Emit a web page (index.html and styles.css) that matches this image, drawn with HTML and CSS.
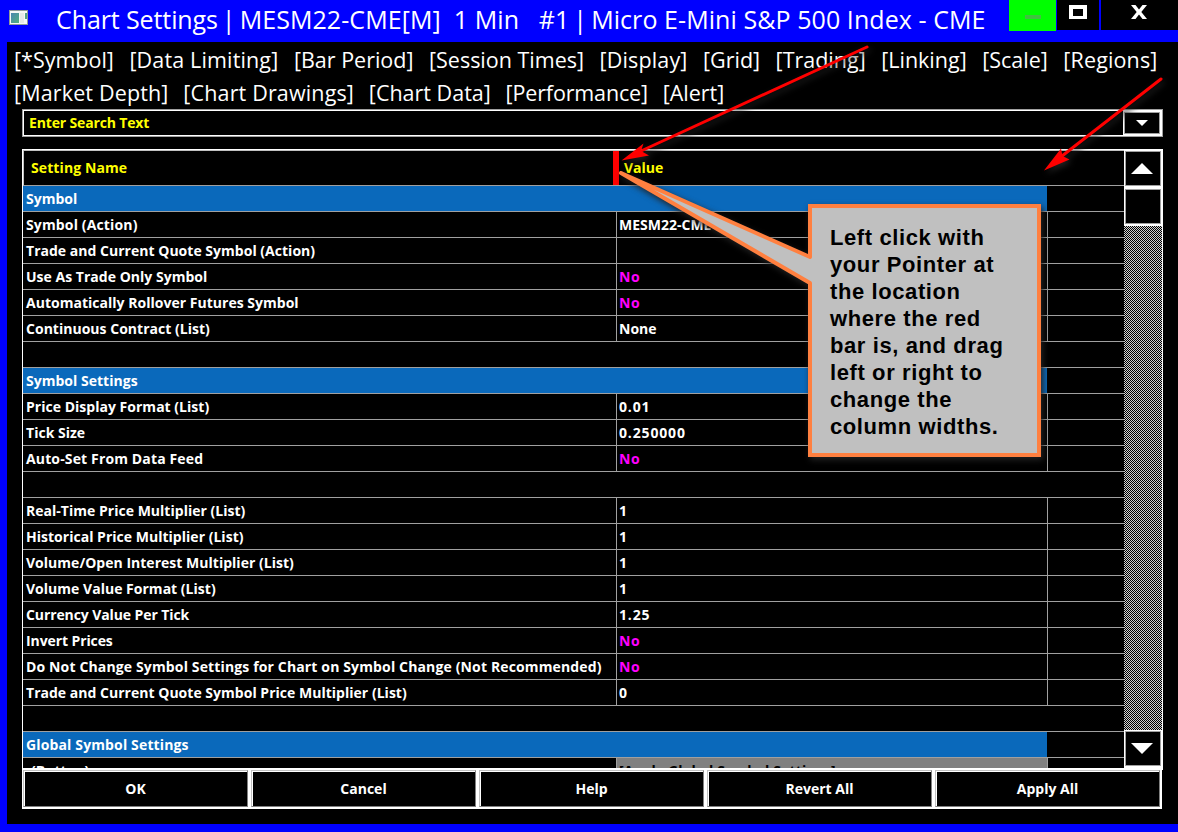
FILE: index.html
```html
<!DOCTYPE html>
<html lang="en">
<head>
<meta charset="utf-8">
<title>Chart Settings</title>
<link rel="stylesheet" href="styles.css">
</head>
<body>
<div class="window">
  <header class="titlebar">
    <svg class="app-icon" width="19" height="15" viewBox="0 0 19 15">
      <defs><linearGradient id="ic" x1="0" y1="0" x2="1" y2="1"><stop offset="0" stop-color="#4a86b0"/><stop offset="1" stop-color="#4fb080"/></linearGradient></defs>
      <rect width="19" height="15" fill="#8f9a98"/><rect x="1" y="1" width="17" height="13" fill="#f4f8f6"/>
      <rect x="2" y="3" width="8" height="10" fill="url(#ic)"/>
      <rect x="11" y="3" width="4" height="10" fill="#e4e8e6"/><rect x="16" y="3" width="2" height="6" fill="#4f9f88"/>
    </svg>
    <h1 class="title"><span class="title-lead">Chart Settings</span><span class="pipe"> | </span>MESM22-CME[M]  1 Min   #1<span class="pipe"> | </span>Micro E-Mini S&amp;P 500 Index - CME</h1>
    <div class="controls">
      <button class="ctl ctl-min"><svg width="16" height="4"><rect width="16" height="4" fill="#40c040"/></svg></button>
      <button class="ctl ctl-max"><svg width="18" height="14"><path fill="#fff" fill-rule="evenodd" d="M0 0H18V14H0ZM4 4V11H14V4Z"/></svg></button>
      <button class="ctl ctl-close"><svg width="16" height="14"><path fill="#fff" d="M0 0H4.500L8 4.500L11.500 0H16L10.300 7L16 14H11.500L8 9.500L4.500 14H0L5.700 7Z"/></svg></button>
    </div>
  </header>
  <nav class="tabs">
    <div class="tab-row"><span>[*Symbol]</span><span class="wide">[Data Limiting]</span><span>[Bar Period]</span><span>[Session Times]</span><span class="wide">[Display]</span><span>[Grid]</span><span>[Trading]</span><span>[Linking]</span><span>[Scale]</span><span class="wide">[Regions]</span></div>
    <div class="tab-row second"><span class="wide">[Market Depth]</span><span class="wide">[Chart Drawings]</span><span>[Chart Data]</span><span class="tight">[Performance]</span><span>[Alert]</span></div>
  </nav>
  <div class="search">
    <span class="search-text">Enter Search Text</span>
    <button class="drop"><svg width="12" height="6"><path d="M0 0H12L6 6Z" fill="#fff"/></svg></button>
  </div>
  <div class="panel">
    <div class="grid">
      <div class="head"><span class="head-name">Setting Name</span><i class="red-bar"></i><span class="head-value">Value</span></div>
      <div class="row section"><span class="name">Symbol</span></div>
      <div class="row"><span class="name loose">Symbol (Action)</span><span class="value">MESM22-CME</span></div>
      <div class="row"><span class="name">Trade and Current Quote Symbol (Action)</span><span class="value"></span></div>
      <div class="row"><span class="name">Use As Trade Only Symbol</span><span class="value no">No</span></div>
      <div class="row"><span class="name">Automatically Rollover Futures Symbol</span><span class="value no">No</span></div>
      <div class="row"><span class="name">Continuous Contract (List)</span><span class="value">None</span></div>
      <div class="row"></div>
      <div class="row section"><span class="name">Symbol Settings</span></div>
      <div class="row"><span class="name">Price Display Format (List)</span><span class="value num">0.01</span></div>
      <div class="row"><span class="name">Tick Size</span><span class="value num">0.250000</span></div>
      <div class="row"><span class="name loose">Auto-Set From Data Feed</span><span class="value no">No</span></div>
      <div class="row"></div>
      <div class="row"><span class="name">Real-Time Price Multiplier (List)</span><span class="value">1</span></div>
      <div class="row"><span class="name">Historical Price Multiplier (List)</span><span class="value">1</span></div>
      <div class="row"><span class="name">Volume/Open Interest Multiplier (List)</span><span class="value">1</span></div>
      <div class="row"><span class="name">Volume Value Format (List)</span><span class="value">1</span></div>
      <div class="row"><span class="name snug">Currency Value Per Tick</span><span class="value num">1.25</span></div>
      <div class="row"><span class="name snug">Invert Prices</span><span class="value no">No</span></div>
      <div class="row"><span class="name loose">Do Not Change Symbol Settings for Chart on Symbol Change (Not Recommended)</span><span class="value no">No</span></div>
      <div class="row"><span class="name">Trade and Current Quote Symbol Price Multiplier (List)</span><span class="value">0</span></div>
      <div class="row"></div>
      <div class="row section"><span class="name loose">Global Symbol Settings</span></div>
      <div class="row"><span class="name indent">(Button)</span><span class="value action">[Apply Global Symbol Settings]</span></div>
    </div>
    <div class="scroll">
      <div class="sbtn"><svg width="22" height="11"><path d="M0 11L11 0L22 11Z" fill="#fff"/></svg></div>
      <div class="sbtn"></div>
      <div class="track"></div>
      <div class="sbtn"><svg width="22" height="11"><path d="M0 0H22L11 11Z" fill="#fff"/></svg></div>
    </div>
  </div>
  <footer class="buttons">
    <button class="btn">OK</button><button class="btn">Cancel</button><button class="btn">Help</button><button class="btn">Revert All</button><button class="btn">Apply All</button>
  </footer>
</div>
<svg class="notes" width="1178" height="832">
  <g class="shadow">
    <g fill="#f00" stroke="#f00">
      <path d="M867 47L641 151" stroke-width="3" stroke-linecap="round"/>
      <path d="M621.500 160.500L643.500 143.500L641 151L649 155.500Z" stroke="none"/>
      <path d="M1161 79L1062 156" stroke-width="3" stroke-linecap="round"/>
      <path d="M1044 170.500L1061 148.500L1062.500 156L1069.500 159.500Z" stroke="none"/>
    </g>
  </g>
  <g class="shadow">
    <path d="M810 206H1039V455H810V283L621 173L810 257Z" fill="#c0c0c0" stroke="#ff8040" stroke-width="4" stroke-linejoin="round"/>
    <path d="M808 257V204H1041V457H808V283H812V453H1037V208H812V257Z" fill="#ff8040"/>
  </g>
</svg>
<div class="callout">Left click with<br>your Pointer at<br>the location<br>where the red<br>bar is, and drag<br>left or right to<br>change the<br>column widths.</div>
</body>
</html>
```

FILE: styles.css
```css
* { box-sizing: border-box; }
body { margin: 0; background: #00f; width: 1178px; height: 832px; overflow: hidden; position: relative; font-family: "Open Sans", "Noto Sans", sans-serif; }
button { font: inherit; color: inherit; border: 0; padding: 0; margin: 0; background: #000; }
svg { display: block; }
.window { width: 1178px; height: 824px; padding-left: 7px; background: linear-gradient(#00f, #00f) left / 7px 100% no-repeat #000; display: flex; flex-direction: column; }
.titlebar { height: 42px; background: #00f; display: flex; align-items: flex-start; flex: none; color: #fff; }
.app-icon { margin: 10px 0 0 2px; flex: none; }
.title { margin: 2px 0 0 28px; width: 953px; font-size: 25px; line-height: 34px; font-weight: 400; white-space: pre; letter-spacing: .07px; }
.title-lead { letter-spacing: -.1px; }
.pipe { word-spacing: -2.600px; }
.controls { display: flex; flex: none; }
.ctl { height: 30px; display: flex; justify-content: center; flex: none; }
.ctl-min { width: 47px; height: 31px; background: #0f0; padding-top: 15px; }
.ctl-max { width: 42px; margin-left: 1px; padding-top: 5px; }
.ctl-close { width: 77px; margin-left: 2px; padding: 5px 2px 0 0; }
.tabs { height: 67px; flex: none; padding: 1px 0 0 7px; color: #fff; font-size: 21.500px; line-height: 33px; }
.tab-row { display: flex; gap: 15.500px; white-space: pre; }
.second { gap: 14.800px; }
.tight { letter-spacing: -.15px; }
.wide { letter-spacing: .15px; }
.search { flex: none; margin-left: 15px; width: 1141px; height: 28px; border: 1px solid #a0a0a0; box-shadow: inset 0 0 0 1px #fff; display: flex; justify-content: space-between; color: #ff0; font-size: 14px; font-weight: 700; }
.search-text { padding: 0 0 0 6px; line-height: 26px; letter-spacing: -.15px; }
.drop { width: 39px; border: solid #fff; border-width: 1px 2px 1px 1px; box-shadow: inset 0 0 0 1px #a0a0a0; margin: 1px 0; display: flex; align-items: center; justify-content: center; }
.panel { flex: none; margin: 12px 0 0 15px; width: 1141px; height: 621px; border: 1px solid #fff; border-bottom-width: 2px; display: flex; color: #fff; font-size: 14px; font-weight: 700; }
.grid { width: 1101px; height: 618px; overflow: hidden; }
.head { height: 36px; border-top: 1px solid #c0c0c0; border-left: 1px solid #c0c0c0; border-bottom: 1px solid #a0a0a0; color: #ff0; display: flex; line-height: 34px; }
.head-name { width: 589px; padding-left: 7px; letter-spacing: .1px; }
.red-bar { width: 6px; background: #f00; }
.head-value { padding-left: 5px; }
.row { height: 26px; border-bottom: 1px solid #a0a0a0; display: flex; line-height: 25px; white-space: nowrap; }
.name { width: 593px; padding-left: 3px; flex: none; letter-spacing: .02px; }
.loose { letter-spacing: .14px; }
.snug { letter-spacing: -.1px; }
.indent { padding-left: 8px; }
.value { width: 432px; padding-left: 2px; border: solid #a0a0a0; border-width: 0 1px; flex: none; }
.no { color: #f0f; letter-spacing: .6px; }
.num { letter-spacing: .85px; }
.action { background: #808080; color: #000; letter-spacing: .15px; }
.section .name { width: 1024px; background: #0a69bb; }
.scroll { width: 38px; display: flex; flex-direction: column; }
.sbtn { height: 38px; flex: none; border: 1px solid #fff; border-bottom-width: 2px; box-shadow: inset 0 0 0 1px #a0a0a0; display: flex; align-items: center; justify-content: center; background: #000; padding-right: 3px; }
.track { flex: 1; background: repeating-conic-gradient(#d0d0d0 0 25%, #000 0 50%) 0 0 / 2px 2px; }
.buttons { flex: none; margin-left: 15px; width: 1140px; height: 39px; background: #fff; padding: 0 2px 2px 1px; display: flex; gap: 3px; color: #fff; font-size: 14px; font-weight: 700; }
.btn { width: 225px; flex: none; border: 1px solid #c0c0c0; border-right-color: #808080; border-bottom-color: #808080; box-shadow: inset 1px 1px #fff; }
.notes { position: absolute; left: 0; top: 0; }
.shadow { filter: drop-shadow(2px 3px 3px #222); }
.callout { position: absolute; left: 830px; top: 224px; font: bold 22px/27px "Liberation Sans", sans-serif; color: #000; letter-spacing: .6px; white-space: nowrap; }
```
